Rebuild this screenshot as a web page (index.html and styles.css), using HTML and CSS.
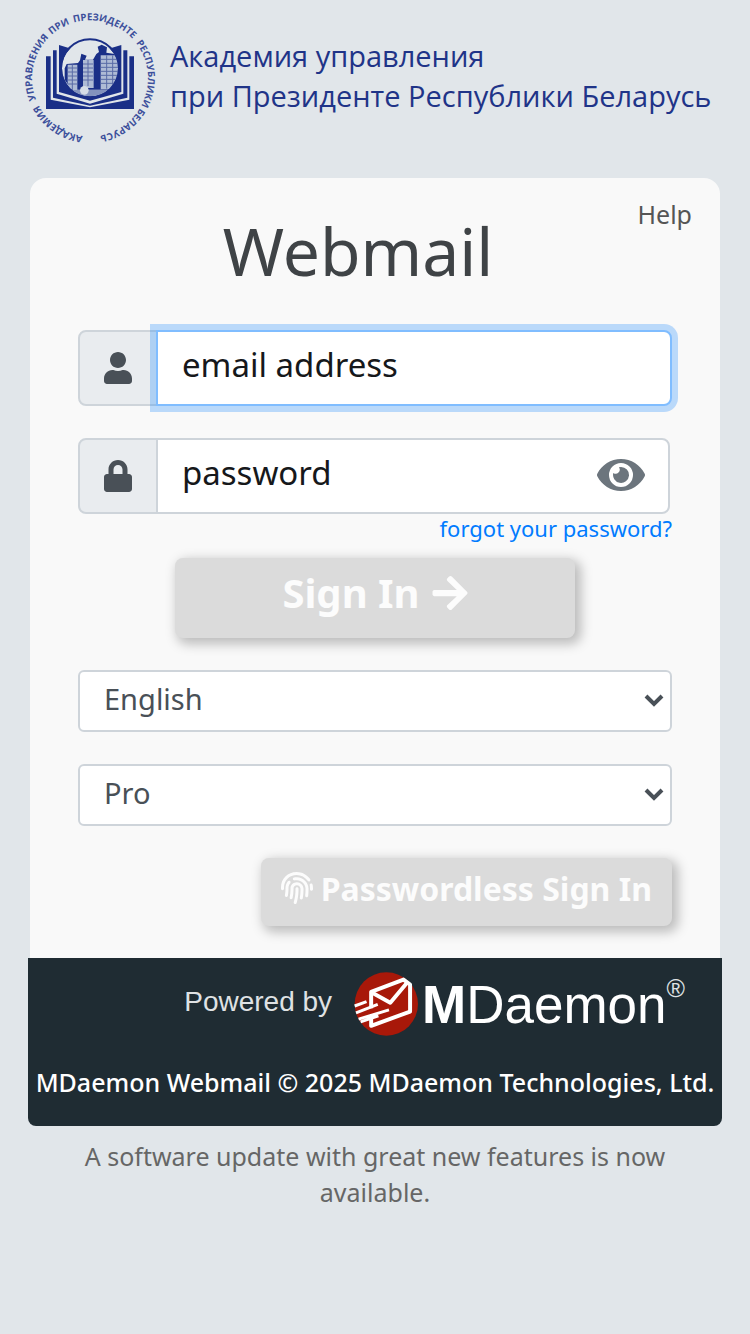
FILE: index.html
```html
<!DOCTYPE html>
<html lang="en">

<head>
    <meta charset="utf-8">
    <meta name="viewport" content="width=device-width, initial-scale=1">
    <title>MDaemon Webmail</title>
    <link rel="stylesheet" href="styles.css">
</head>

<body>
    <header class="brand" lang="ru">
        <svg class="emblem" viewBox="66 30 408 408" aria-hidden="true">
            <defs>
                <path id="ring" d="M270 409a174 174 0 0 1 0-348a174 174 0 0 1 0 348" />
                <clipPath id="disc"><circle cx="270" cy="205" r="84" /></clipPath>
            </defs>
            <g class="emblem-text">
                <text><textPath href="#ring" startOffset="2%">АКАДЕМИЯ</textPath></text>
                <text><textPath href="#ring" startOffset="19%">УПРАВЛЕНИЯ</textPath></text>
                <text><textPath href="#ring" startOffset="38.500%">ПРИ</textPath></text>
                <text><textPath href="#ring" startOffset="45.500%">ПРЕЗИДЕНТЕ</textPath></text>
                <text><textPath href="#ring" startOffset="64.500%">РЕСПУБЛИКИ</textPath></text>
                <text><textPath href="#ring" startOffset="83.500%">БЕЛАРУСЬ</textPath></text>
            </g>
            <!-- book pages -->
            <path fill="#1a2f87" d="M138 169h14v130l118 23 118-23V169h14v158H138z" />
            <path fill="#1a2f87" d="M159 151h11v130l100 30 100-30V151h12v142l-112 24-111-24z" />
            <path fill="#1a2f87" d="M177 135l32 10h122l33-10v141l-94 26-93-26z" />
            <circle cx="270" cy="205" r="84" fill="#e1e6ea" />
            <!-- city inside the circle -->
            <g clip-path="url(#disc)">
                <path fill="#1a2f87" d="M194 205l6-13 34-3 6-8 4-20 16 6-5 12h24l10-17 8-6-4-16 12-6 16 8-2 16 36 6v105H215l-21-30z" />
                <path fill="#aebbd5" d="M203 194h29v78h-29zM249 180h32v84h-32zM302 166h54v102h-54z" />
                <path stroke="#5a6ba6" stroke-width="3" fill="none" d="M203 204h29M203 216h29M203 228h29M203 240h29M203 252h29M249 192h30M249 204h30M249 216h30M249 228h30M249 240h30M302 178h54M302 190h54M302 202h54M302 214h54M302 226h54M302 238h54M302 250h54M217 194v78M264 180v78M320 166v100M338 166v100" />
                <path fill="#8393bd" d="M202 270h136l-68 30z" />
                <circle cx="253" cy="271" r="13" fill="#d5dce6" />
            </g>
            <circle cx="270" cy="205" r="87" fill="none" stroke="#1a2f87" stroke-width="6" />
        </svg>
        <p class="brand-name">Академия управления<br>при Президенте Республики Беларусь</p>
    </header>

    <main>
        <form class="card">
            <div class="card-head">
                <h1>Webmail</h1>
                <a class="help" href="#">Help</a>
            </div>

            <div class="field active">
                <label for="user">
                    <svg class="icon" viewBox="0 0 448 512" role="img" aria-label="User"><path d="M224 256c70.700 0 128-57.300 128-128S294.700 0 224 0 96 57.300 96 128s57.300 128 128 128zm89.600 32h-16.700c-22.200 10.200-46.900 16-72.900 16s-50.600-5.800-72.900-16h-16.700C60.200 288 0 348.200 0 422.400V464c0 26.500 21.500 48 48 48h352c26.500 0 48-21.500 48-48v-41.600c0-74.200-60.200-134.400-134.400-134.400z" /></svg>
                </label>
                <input id="user" type="email" placeholder="email address">
            </div>

            <div class="field secret">
                <label for="pass">
                    <svg class="icon" viewBox="0 0 448 512" role="img" aria-label="Password"><path d="M400 224h-24v-72C376 68.200 307.800 0 224 0S72 68.200 72 152v72H48c-26.500 0-48 21.500-48 48v192c0 26.500 21.500 48 48 48h352c26.500 0 48-21.500 48-48V272c0-26.500-21.500-48-48-48zm-104 0H152v-72c0-39.700 32.300-72 72-72s72 32.300 72 72v72z" /></svg>
                </label>
                <input id="pass" type="password" placeholder="password">
                <button class="reveal" type="button" aria-label="Show password">
                    <svg viewBox="0 64 576 384"><path d="M572.520 241.400C518.290 135.590 410.930 64 288 64S57.680 135.640 3.480 241.410a32.350 32.350 0 0 0 0 29.190C57.710 376.410 165.070 448 288 448s230.320-71.640 284.520-177.410a32.350 32.350 0 0 0 0-29.190zM288 400a144 144 0 1 1 144-144 143.930 143.930 0 0 1-144 144zm0-240a95.310 95.310 0 0 0-25.310 3.790 47.850 47.850 0 0 1-66.900 66.900A95.780 95.780 0 1 0 288 160z" /></svg>
                </button>
            </div>
            <a class="forgot" href="#">forgot your password?</a>

            <button class="btn sign-in" type="submit" disabled>
                Sign In
                <svg viewBox="0 0 448 512"><path d="M190.500 66.900l22.200-22.200c9.400-9.400 24.600-9.400 33.900 0L441 239c9.400 9.400 9.400 24.600 0 33.900L246.600 467.300c-9.400 9.400-24.600 9.400-33.900 0l-22.200-22.200c-9.500-9.500-9.300-25 .4-34.300L311.400 296H24c-13.300 0-24-10.700-24-24v-32c0-13.300 10.700-24 24-24h287.400L190.900 101.200c-9.800-9.300-10-24.800-.4-34.300z" /></svg>
            </button>

            <div class="select">
                <select aria-label="Language">
                    <option>English</option>
                </select>
                <svg viewBox="0 0 20 12"><path d="M2 2l8 8 8-8" /></svg>
            </div>
            <div class="select">
                <select aria-label="Theme">
                    <option>Pro</option>
                </select>
                <svg viewBox="0 0 20 12"><path d="M2 2l8 8 8-8" /></svg>
            </div>

            <button class="btn passwordless" type="button" disabled>
                <svg viewBox="0 0 512 512"><path d="M256.120 245.960c-13.250 0-24 10.740-24 24 1.140 72.250-8.140 141.900-27.700 211.550-2.730 9.720 2.150 30.490 23.120 30.490 10.480 0 20.110-6.920 23.090-17.520 13.530-47.910 31.040-125.410 29.480-224.520.01-13.250-10.730-24-23.990-24zm-.86-81.730C194 164.160 151.250 211.300 152.100 265.320c.75 47.940-3.750 95.910-13.370 142.550-2.690 12.980 5.670 25.690 18.640 28.360 13.050 2.670 25.670-5.660 28.360-18.640 10.340-50.090 15.170-101.580 14.370-153.020-.41-25.950 19.920-52.490 54.450-52.340 31.310.47 57.150 25.340 57.620 55.470.77 48.050-2.810 96.330-10.610 143.550-2.170 13.060 6.690 25.420 19.760 27.580 19.970 3.330 26.810-15.100 27.580-19.770 8.280-50.030 12.060-101.210 11.270-152.110-.88-55.800-47.940-101.880-104.910-102.720zm-110.690-19.780c-10.300-8.340-25.370-6.800-33.760 3.480-25.620 31.500-39.390 71.280-38.750 112 .59 37.580-2.470 75.270-9.110 112.050-2.340 13.050 6.310 25.530 19.360 27.890 20.110 3.500 27.070-14.810 27.890-19.360 7.190-39.840 10.500-80.660 9.860-121.330-.47-29.880 9.200-57.880 28-80.970 8.350-10.280 6.790-25.390-3.490-33.760zm109.470-62.330c-15.410-.41-30.870 1.440-45.780 4.970-12.890 3.060-20.870 15.980-17.830 28.890 3.060 12.890 16 20.830 28.890 17.830 11.050-2.610 22.470-3.770 34-3.690 75.430 1.130 137.730 61.500 138.880 134.580.59 37.880-1.280 76.110-5.580 113.630-1.500 13.170 7.950 25.080 21.110 26.580 16.720 1.950 25.510-11.880 26.580-21.110a929.060 929.060 0 0 0 5.890-119.850c-1.560-98.750-85.070-180.330-186.160-181.830zm252.070 121.450c-2.860-12.920-15.510-21.200-28.610-18.270-12.940 2.860-21.120 15.660-18.260 28.610 4.710 21.410 4.910 37.410 4.700 61.600-.11 13.270 10.550 24.090 23.800 24.200h.2c13.170 0 23.890-10.610 24-23.800.18-22.180.4-44.110-5.830-72.340zm-40.120-90.720C417.290 43.460 337.600 1.290 252.810.02 183.020-.82 118.470 24.910 70.460 72.940 24.090 119.370-.9 181.040.14 246.650l-.12 21.470c-.39 13.250 10.030 24.310 23.280 24.690.23.02.48.02.72.02 12.920 0 23.590-10.300 23.970-23.300l.16-23.640c-.83-52.500 19.160-101.860 56.280-139 38.760-38.800 91.340-59.670 147.680-58.860 69.450 1.030 134.730 35.560 174.620 92.390 7.610 10.860 22.560 13.450 33.420 5.860 10.840-7.620 13.460-22.590 5.840-33.430z" /></svg>
                Passwordless Sign In
            </button>
        </form>

        <footer class="footer">
            <div class="powered">
                <span class="powered-by">Powered by</span>
                <svg class="mark" viewBox="40 64 194 194" aria-hidden="true">
                    <circle cx="138" cy="161" r="96" fill="#a81809" />
                    <g fill="none" stroke="#fff" stroke-width="12" stroke-linejoin="round">
                        <path d="M92 174v-50l98-37 20 15v82L92 227v-32" />
                        <path d="M94 126l56 31 52-62" />
                        <path stroke-width="9" d="M42 167l36-13M46 188l66-26M54 207l92-28M60 215l54-18" />
                    </g>
                </svg>
                <span class="wordmark"><b>M</b>Daemon</span><span class="reg">®</span>
            </div>
            <p class="copyright">MDaemon Webmail © 2025 MDaemon Technologies, Ltd.</p>
        </footer>

        <p class="notice">A software update with great new features is now available.</p>
    </main>
</body>

</html>
```
FILE: styles.css
```css
* {
    box-sizing: border-box;
}

body {
    margin: 0;
    background-color: #e1e6ea;
    color: #495057;
    font-family: "Noto Sans", sans-serif;
    font-size: 25px;
}

a {
    text-decoration: none;
}

.brand {
    display: flex;
    align-items: center;
    gap: 12px;
    height: 178px;
    padding: 0 22px 22px;
}

.emblem {
    flex: none;
    width: 136px;
    height: 136px;
}

.emblem-text {
    fill: #3c4f9b;
    font-family: "Open Sans", sans-serif;
    font-size: 29px;
    font-weight: 700;
}

.brand-name {
    margin: 0;
    padding-bottom: 4px;
    color: #1f3488;
    font-family: "Open Sans", sans-serif;
    font-size: 29px;
    font-weight: 500;
    line-height: 40px;
    white-space: nowrap;
}

main {
    padding: 0 28px;
}

.card {
    display: flex;
    flex-direction: column;
    margin: 0 2px;
    padding: 0 48px 32px;
    border-radius: 16px 16px 0 0;
    background-color: #f9f9f9;
}

.card-head {
    display: grid;
    height: 152px;
    margin: 0 -20px;
    padding-top: 18px;
}

.card-head > * {
    grid-area: 1 / 1;
}

h1 {
    margin: 6px 34px 0 0;
    color: #3f4346;
    font-size: 66px;
    font-weight: 400;
    line-height: 96px;
    text-align: center;
}

.help {
    justify-self: end;
    align-self: start;
    color: #555;
    line-height: 36px;
}

.field {
    position: relative;
    display: flex;
    height: 76px;
    margin-bottom: 32px;
}

.field label {
    display: flex;
    align-items: center;
    justify-content: center;
    width: 80px;
    border: 2px solid #ced4da;
    border-radius: 8px 0 0 8px;
    background-color: #e9ecef;
}

.icon {
    width: 28px;
    height: 32px;
    fill: #495057;
}

.field input {
    flex: 1;
    min-width: 0;
    margin-left: -2px;
    padding: 0 24px 8px;
    border: 2px solid #ced4da;
    border-radius: 0 8px 8px 0;
    background-color: #fff;
    font-family: inherit;
    font-size: 33px;
    outline: none;
}

.field input::placeholder {
    color: #16181b;
    opacity: 1;
}

.active input {
    border-color: #80bdff;
    box-shadow: 0 0 0 6px rgba(0, 123, 255, 0.25);
}

.secret {
    margin: 0 2px 0 0;
}

.reveal {
    position: absolute;
    top: 21px;
    right: 25px;
    padding: 0;
    border: 0;
    background: none;
    line-height: 0;
}

.reveal svg {
    width: 48px;
    height: 32px;
    fill: #6c757d;
}

.forgot {
    align-self: flex-end;
    color: #007bff;
    font-size: 22px;
    line-height: 28px;
}

.btn {
    display: flex;
    align-items: center;
    justify-content: center;
    border: 0;
    border-radius: 8px;
    background-color: #dbdbdb;
    box-shadow: 4px 4px 12px 2px rgba(0, 0, 0, 0.25);
    color: #fcfcfc;
    font-family: inherit;
    font-weight: 700;
}

.btn svg {
    fill: currentColor;
}

.sign-in {
    align-self: center;
    gap: 12px;
    width: 400px;
    height: 80px;
    margin: 16px 0 32px;
    padding-bottom: 12px;
    font-size: 40px;
}

.sign-in svg {
    width: 36px;
    height: 40px;
}

.select {
    position: relative;
    margin-bottom: 32px;
}

.select select {
    display: block;
    width: 100%;
    height: 62px;
    padding: 0 24px 6px;
    border: 2px solid #ced4da;
    border-radius: 6px;
    background-color: #fff;
    color: #495057;
    font-family: inherit;
    font-size: 29px;
    appearance: none;
}

.select svg {
    position: absolute;
    top: 23px;
    right: 8px;
    width: 20px;
    height: 14px;
    fill: none;
    stroke: #495057;
    stroke-width: 4;
}

.passwordless {
    align-self: flex-end;
    gap: 8px;
    height: 68px;
    padding: 0 20px 8px;
    font-size: 32px;
}

.passwordless svg {
    width: 32px;
    height: 32px;
}

.footer {
    height: 168px;
    padding-top: 12px;
    border-radius: 0 0 8px 8px;
    background-color: #1f2c33;
    color: #fff;
}

.powered {
    display: flex;
    align-items: center;
    justify-content: flex-end;
    height: 68px;
    padding-right: 37px;
    font-family: "Liberation Sans", Arial, sans-serif;
}

.powered-by {
    margin-right: 22px;
    padding-bottom: 4px;
    color: #dfe2e4;
    font-size: 28px;
}

.mark {
    width: 64px;
    height: 64px;
    margin-right: 4px;
}

.wordmark {
    font-size: 53px;
}

.reg {
    align-self: flex-start;
    padding-top: 4px;
    color: #dfe2e4;
    font-size: 25px;
}

.copyright {
    margin: 24px 0 0;
    line-height: 40px;
    font-weight: 500;
    text-align: center;
    white-space: nowrap;
}

.notice {
    margin: 12px 32px;
    color: #666;
    line-height: 36px;
    text-align: center;
}
```
